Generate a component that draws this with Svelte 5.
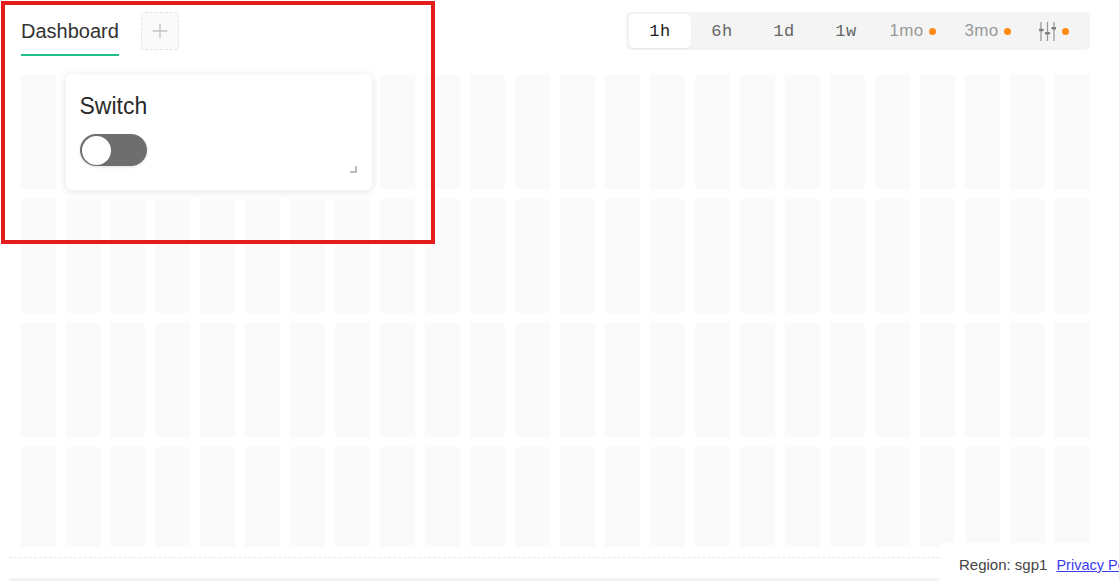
<script lang="ts">
  // Dashboard page with one switch widget over the empty layout grid.
  const ranges = [
    { label: '1h', active: true },
    { label: '6h' },
    { label: '1d' },
    { label: '1w' },
    { label: '1mo', pro: true },
    { label: '3mo', pro: true }
  ]
  const rows = [1, 2, 3, 4]
  const cols = Array.from({ length: 24 }, (_, i) => i + 1)
</script>

<div class="page">
  <header class="top">
    <div class="tabs">
      <div class="tab">Dashboard</div>
      <button class="add" aria-label="Add dashboard">
        <svg width="18" height="18" viewBox="0 0 18 18">
          <path d="M9 1.5v15M1.5 9h15" stroke="#c4c4c4" stroke-width="1.4" fill="none" />
        </svg>
      </button>
    </div>
    <div class="ranges">
      {#each ranges as r}
        <button class="range" class:active={r.active} class:pro={r.pro}>
          <span>{r.label}</span>
          {#if r.pro}<i class="dot"></i>{/if}
        </button>
      {/each}
      <button class="range tune" aria-label="Custom range">
        <svg width="17" height="19" viewBox="0 0 17 19" fill="none">
          <path d="M2 0v19M8.5 0v19M15 0v19" stroke="#9a9a9a" stroke-width="1.3" />
          <path d="M0.5 8h3M7 11.3h3M13.5 6.3h3" stroke="#808080" stroke-width="2.6" stroke-linecap="round" />
        </svg>
        <i class="dot"></i>
      </button>
    </div>
  </header>

  <main class="grid">
    {#each rows as row}
      {#each cols as col}
        <div class="cell" class:short={row === 4} style:grid-row={row} style:grid-column={col}></div>
      {/each}
    {/each}
    <section class="card">
      <h3>Switch</h3>
      <div class="toggle"><span class="knob"></span></div>
      <span class="resize"></span>
    </section>
  </main>

  <div class="rule"></div>

  <footer class="foot">
    <span>Region: sgp1</span>
    <a href="#privacy">Privacy Policy</a>
  </footer>
  <div class="bar"></div>
  <div class="edge"></div>
  <div class="highlight"></div>
</div>

<style>
  :global(body) {
    margin: 0;
    background: #fff;
    overflow: hidden;
  }
  .page {
    position: relative;
    width: 1120px;
    height: 581px;
    overflow: hidden;
    font-family: 'Liberation Sans', sans-serif;
    color: #2b2b2b;
  }
  .top {
    display: flex;
    justify-content: space-between;
    align-items: flex-start;
    padding: 12px 30px 0 21px;
    height: 63px;
    box-sizing: border-box;
  }
  .tabs {
    display: flex;
    gap: 22px;
  }
  .tab {
    width: 98px;
    height: 44px;
    box-sizing: border-box;
    padding-top: 6px;
    border-bottom: 2px solid #1fbf8f;
    font-size: 20px;
    line-height: 26px;
    color: #333;
    white-space: nowrap;
  }
  .add {
    width: 38px;
    height: 38px;
    padding: 0;
    display: grid;
    place-items: center;
    background: #fafafa;
    border: 1px dashed #e3e3e3;
    border-radius: 4px;
  }
  .ranges {
    display: flex;
    height: 38px;
    box-sizing: border-box;
    padding: 2px 3px;
    background: #f4f4f4;
    border-radius: 5px;
  }
  .range {
    width: 62px;
    display: flex;
    align-items: center;
    justify-content: center;
    gap: 6px;
    padding: 0;
    background: none;
    border: 0;
    border-radius: 5px;
    font-family: 'Liberation Mono', monospace;
    font-size: 17px;
    letter-spacing: 0.6px;
    color: #666;
  }
  .range.active {
    background: #fff;
    color: #222;
    box-shadow: 0 1px 2px rgba(0, 0, 0, 0.06);
  }
  .range.pro {
    width: 75px;
    box-sizing: border-box;
    padding-right: 3px;
    color: #999;
    font-family: 'Liberation Sans', sans-serif;
    font-size: 17px;
    letter-spacing: 0.3px;
  }
  .tune {
    width: 60px;
    padding-right: 6px;
    box-sizing: border-box;
    gap: 6px;
  }
  .dot {
    flex: none;
    width: 7px;
    height: 7px;
    border-radius: 50%;
    background: #ff8a14;
  }
  .grid {
    display: grid;
    grid-template-columns: repeat(24, 1fr);
    grid-template-rows: 114px 114px 114px 114px;
    gap: 10px 9.95px;
    margin: 12px 0 0 20.55px;
    width: 1068.97px;
  }
  .cell {
    background: #fafafa;
  }
  .cell.short {
    height: 100px;
  }
  .card {
    grid-row: 1;
    grid-column: 2 / span 7;
    position: relative;
    z-index: 1;
    margin: -1px -2px -1px 0;
    padding: 18px 14px 0;
    background: #fff;
    border-radius: 6px;
    box-shadow: 0 1px 8px rgba(0, 0, 0, 0.12);
  }
  h3 {
    margin: 0 0 14px;
    font-size: 23px;
    line-height: 28px;
    font-weight: 400;
    color: #2a2a2a;
  }
  .toggle {
    width: 67px;
    height: 32px;
    box-sizing: border-box;
    padding: 1.5px 2px;
    background: #6e6e6e;
    border-radius: 16px;
    box-shadow: 0 1px 3px rgba(0, 0, 0, 0.12);
  }
  .knob {
    display: block;
    width: 29px;
    height: 29px;
    background: #fff;
    border-radius: 50%;
  }
  .resize {
    position: absolute;
    right: 15px;
    bottom: 17px;
    width: 5px;
    height: 5px;
    border-right: 2px solid #bdbdbd;
    border-bottom: 2px solid #bdbdbd;
  }
  .rule {
    position: absolute;
    left: 9px;
    top: 557px;
    width: 931px;
    border-top: 1px dashed #e8e8e8;
  }
  .foot {
    position: absolute;
    left: 940px;
    top: 543px;
    width: 179px;
    height: 38px;
    box-sizing: border-box;
    padding-left: 19px;
    padding-top: 12px;
    background: #fff;
    display: flex;
    gap: 9px;
    font-size: 15px;
    line-height: 20px;
    color: #444;
    white-space: nowrap;
    overflow: hidden;
  }
  .foot a {
    color: #3a3aee;
    font-size: 14.5px;
  }
  .bar {
    position: absolute;
    left: 9px;
    top: 578px;
    width: 931px;
    height: 3px;
    background: #f3f3f6;
  }
  .edge {
    position: absolute;
    right: 0;
    top: 0;
    width: 1px;
    height: 581px;
    background: #eeeeee;
  }
  .highlight {
    position: absolute;
    left: 1px;
    top: 1px;
    width: 434px;
    height: 243px;
    box-sizing: border-box;
    border: 4px solid #e31c1c;
    pointer-events: none;
    z-index: 2;
  }
</style>
